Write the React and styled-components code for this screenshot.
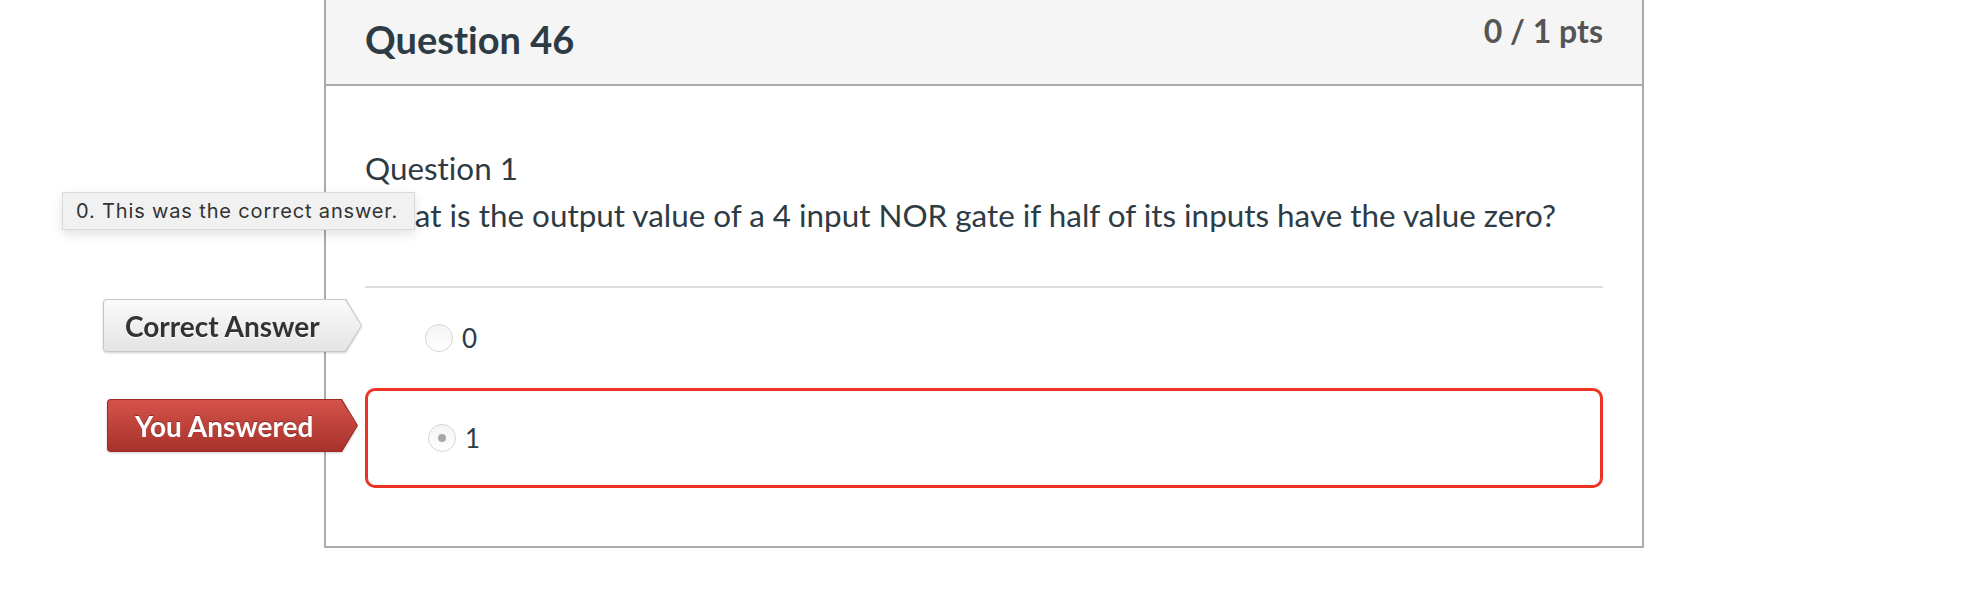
import React from 'react'
import styled, { createGlobalStyle } from 'styled-components'

const GlobalStyle = createGlobalStyle`
  body {
    margin: 0;
    background: #fff;
    font-family: Lato, 'Noto Sans', sans-serif;
    font-variant-ligatures: none;
    color: #2d3b45;
  }
`

const Page = styled.div`
  width: 100%;
  height: 594px;
  overflow: hidden;
`

const Card = styled.section`
  position: relative;
  box-sizing: border-box;
  width: 1320px;
  margin: 0 auto;
  border: 2px solid #aaaaaa;
  border-top: none;
  background: #fff;
`

const Header = styled.header`
  display: flex;
  justify-content: space-between;
  align-items: flex-start;
  box-sizing: border-box;
  height: 86px;
  padding: 0 39px;
  background: #f5f5f5;
  border-bottom: 2px solid #aaaaaa;
`

const Title = styled.h2`
  margin: 17px 0 0;
  font-size: 38px;
  line-height: 1.2;
  font-weight: 700;
  color: #2d3b45;
`

const Points = styled.div`
  margin-top: 12px;
  font-size: 32px;
  line-height: 1.2;
  font-weight: 700;
  color: #555;
`

const Body = styled.div`
  padding: 64px 39px 58px;
`

const QuestionName = styled.div`
  font-size: 31.4px;
  line-height: 36px;
`

const QuestionText = styled.p`
  margin: 11px 0 53px;
  font-size: 31.4px;
  line-height: 36px;
`

const Answers = styled.div`
  border-top: 2px solid #dddddd;
`

const AnswerRow = styled.div`
  position: relative;
  box-sizing: border-box;
  height: 100px;
  display: flex;
  align-items: center;
  gap: 9px;
  padding-left: ${p => (p.$wrong ? 60 : 57)}px;
  border: 3px solid ${p => (p.$wrong ? '#ec3324' : 'transparent')};
  border-radius: 10px;
`

const Radio = styled.span`
  box-sizing: border-box;
  width: 28px;
  height: 28px;
  border-radius: 50%;
  border: 1px solid #d6d6d6;
  background: linear-gradient(#f4f4f4, #ffffff);
  display: flex;
  align-items: center;
  justify-content: center;

  &::after {
    content: '';
    display: ${p => (p.$checked ? 'block' : 'none')};
    width: 8px;
    height: 8px;
    border-radius: 50%;
    background: #a8a8a8;
  }
`

const AnswerText = styled.span`
  font-size: 26px;
  color: #2d3b45;
`

const arrowShape = 'polygon(0 0, calc(100% - 16px) 0, 100% 50%, calc(100% - 16px) 100%, 0 100%)'

const ArrowLabel = styled.div`
  position: absolute;
  top: 8px;
  right: calc(100% + ${p => p.$offset}px);
  filter: drop-shadow(0 1px 1px rgba(0, 0, 0, 0.18));
`

const ArrowEdge = styled.div`
  padding: 1px;
  border-radius: 4px;
  clip-path: ${arrowShape};
  background: ${p => (p.$wrong ? '#9c2b24' : '#c8c8c8')};
`

const ArrowFace = styled.div`
  box-sizing: border-box;
  height: 51px;
  width: ${p => p.$width}px;
  display: flex;
  align-items: center;
  padding-left: ${p => p.$pad}px;
  border-radius: 3px;
  clip-path: ${arrowShape};
  font-size: 28px;
  font-weight: 700;
  white-space: nowrap;
  color: ${p => (p.$wrong ? '#fff' : '#333')};
  text-shadow: ${p => (p.$wrong ? '0 -1px 0 rgba(0,0,0,0.35)' : '0 1px 0 #fff')};
  background: ${p =>
    p.$wrong
      ? 'linear-gradient(#d4534a, #a7322b)'
      : 'linear-gradient(#fbfbfb, #e4e4e4)'};
`

const Tooltip = styled.div`
  position: absolute;
  left: -264px;
  top: 192px;
  box-sizing: border-box;
  height: 38px;
  padding: 0 16px 0 13px;
  display: flex;
  align-items: center;
  background: #f1f1f1;
  border: 1px solid #dadada;
  box-shadow: 0 4px 10px rgba(0, 0, 0, 0.12);
  font-family: Inter, 'Liberation Sans', sans-serif;
  font-size: 20px;
  letter-spacing: 0.85px;
  color: #333;
  white-space: nowrap;
  z-index: 2;
`

const App = () => {
  return (
    <>
      <GlobalStyle />
      <Page>
        <Card>
          <Header>
            <Title>Question 46</Title>
            <Points>0 / 1 pts</Points>
          </Header>
          <Body>
            <QuestionName>Question 1</QuestionName>
            <QuestionText>
              What is the output value of a 4 input NOR gate if half of its inputs have the value zero?
            </QuestionText>
            <Answers>
              <AnswerRow>
                <ArrowLabel $offset={6}>
                  <ArrowEdge>
                    <ArrowFace $width={257} $pad={21}>Correct Answer</ArrowFace>
                  </ArrowEdge>
                </ArrowLabel>
                <Radio />
                <AnswerText>0</AnswerText>
              </AnswerRow>
              <AnswerRow $wrong>
                <ArrowLabel $offset={10}>
                  <ArrowEdge $wrong>
                    <ArrowFace $wrong $width={249} $pad={27}>You Answered</ArrowFace>
                  </ArrowEdge>
                </ArrowLabel>
                <Radio $checked />
                <AnswerText>1</AnswerText>
              </AnswerRow>
            </Answers>
          </Body>
          <Tooltip>0. This was the correct answer.</Tooltip>
        </Card>
      </Page>
    </>
  )
}

export default App
